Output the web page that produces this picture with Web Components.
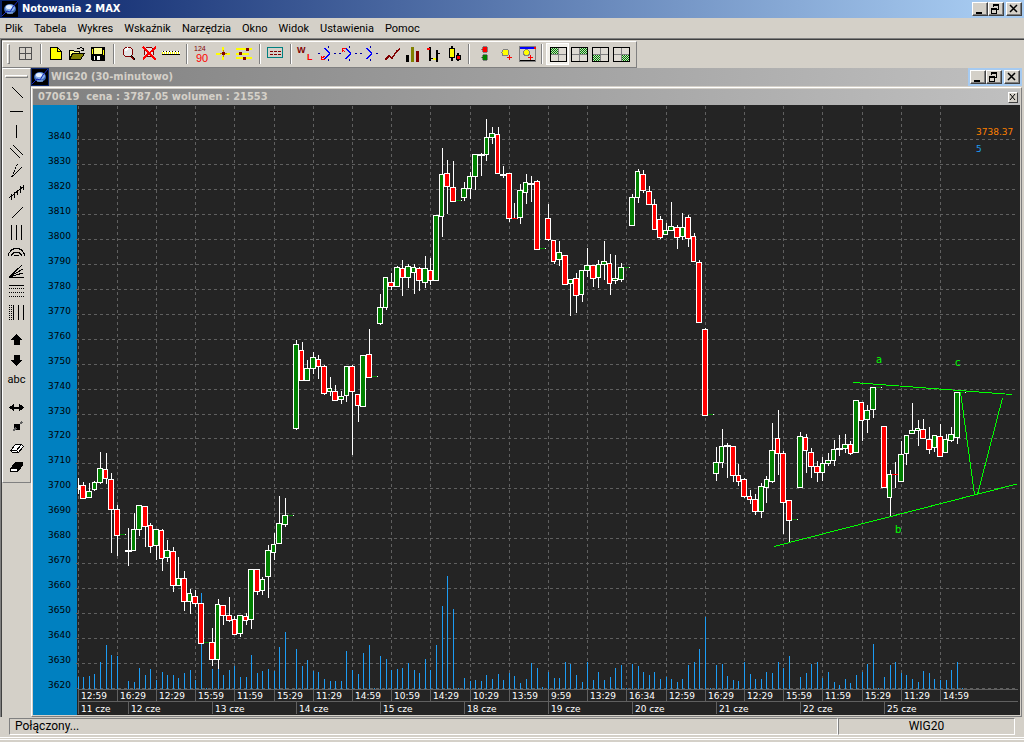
<!DOCTYPE html>
<html lang="pl">
<head>
<meta charset="utf-8">
<title>Notowania 2 MAX</title>
<style>
  body {
    margin: 0;
    background: #d4d0c8;
    --face: #d4d0c8;
    --shadow: #808080;
    --dark: #404040;
    --light: #ffffff;
    --caption: "DejaVu Sans Condensed", "DejaVu Sans", sans-serif;
    font: 11px/14px Roboto, "Liberation Sans", sans-serif;
    color: #000;
  }
</style>
</head>
<body>
<notowania-app></notowania-app>

<script>
const LOGO = /* html */`
  <svg width="16" height="16" viewBox="0 0 16 16" aria-hidden="true">
    <rect width="16" height="16" fill="#000"/>
    <ellipse cx="8" cy="8" rx="6" ry="5" fill="#3c68b8"/>
    <ellipse cx="8" cy="7" rx="5" ry="3.5" fill="#86aee6"/>
    <ellipse cx="7" cy="6" rx="3" ry="2" fill="#e8f2ff"/>
    <path d="M0 15L5 10l3 1 3-5 5-6" fill="none" stroke="#1828b8"/>
    <path d="M5 12h6" stroke="#9cc0f0"/>
  </svg>`;

const ARROW_DOTS = `<path d="M1 9.5h2M17 9.5h2M11.5 2v2M11.5 15v2" stroke="#0000a0"/><path d="M8 4l4.5 5.5-4.5 5.5" stroke="#00f" stroke-width="1.5"/>`;
const quadrant = (x, y) => `
  <path d="M3.5 3.5h16v14h-16z" fill="#dedad2" stroke="#000"/>
  <path d="M11.5 4v13M4 10.5h15" stroke="#808080"/>
  <rect x="${x}" y="${y}" width="7" height="6" fill="url(#check)"/>`;

// main toolbar icons, 21 x 20
const ICONS = {
  siatka: `<path d="M4.5 3.5h12v12h-12zM10.5 3.5v12M4.5 9.5h12" stroke="#505050"/>`,
  nowy: `<path d="M4.5 3.5h7l4 4v8h-11z" fill="#ff0" stroke="#000"/><path d="M11.5 3.5v4h4" stroke="#000"/>`,
  otworz: `<path d="M2.5 15.5v-9h4l1 1h5v2" fill="#ffff80" stroke="#000"/><path d="M2.5 15.5l3-6h12l-4 6z" fill="#808000" stroke="#000"/><path d="M10 4.5h2l2-1 2 1v2M14 6.5h3" stroke="#000"/>`,
  zapisz: `<path d="M3.5 3.5h13v13h-12l-1-1z" fill="#000" stroke="#000"/><path d="M6 4h8v6h-8z" fill="#ffff90"/><path d="M4 5h1v5h-1zM15 6h1v5h-1z" fill="#ff0"/><path d="M6 12h6v4h-6z" fill="#fff"/><path d="M7 12h2v4h-2z" fill="#000"/>`,
  lupa: `<circle cx="9" cy="8" r="5" fill="#e4e4e4" stroke="#800000"/><path d="M6 7l3-3" stroke="#fff" stroke-width="2"/><path d="M12 12l4 4" stroke="#000" stroke-width="2"/><path d="M12 12l3 4" stroke="#800000"/>`,
  lupax: `<circle cx="9" cy="8" r="5" fill="#e4e4e4" stroke="#800000"/><path d="M12 12l4 4" stroke="#800000" stroke-width="2"/><path d="M3 3l13 13M16 3L3 15" stroke="#f00" stroke-width="2"/>`,
  linijka: `<path d="M1 7h18v4h-18z" fill="#fff"/><path d="M1 9h18" stroke="#ff0" stroke-width="2" stroke-dasharray="1 1"/><path d="M1 10.5h18" stroke="#000"/><path d="M2 7.5h17" stroke="#000" stroke-dasharray="1 2"/>`,
  liczby: `<text x="2" y="7" font-size="7" fill="#800000">124</text><text x="4" y="18" font-size="11" fill="#f00">90</text>`,
  plus: `<path d="M10 3v4M10 12v4M3 9.5h5M12 9.5h5" stroke="#ff0" stroke-width="2"/><path d="M10 6v7M7 9.5h7" stroke="#c08000"/><path d="M9 8h3v3h-3z" fill="#800000"/>`,
  suwaki: `<path d="M2 5h16M2 9.5h13M2 14h16" stroke="#ff0" stroke-width="2"/><path d="M12 4h3v3h-3zM5 8h3v3h-3zM9 13h3v3h-3z" fill="#800000"/>`,
  panel: `<path d="M2.5 3.5h15v10h-15z" stroke="#008080"/><path d="M5 7.5h11M5 10.5h11" stroke="#800000" stroke-dasharray="3 1"/>`,
  wl: `<text x="1" y="9" font-size="9" font-weight="bold" fill="#800000">W</text><text x="11" y="16" font-size="9" font-weight="bold" fill="#f00">L</text>`,
  fala1: ARROW_DOTS + `<path d="M4.5 12v3.5h3M4 15l4-3" stroke="#f00"/>`,
  fala2: ARROW_DOTS + `<path d="M4.5 8v-3.5h3M4 5l3 3" stroke="#f00"/>`,
  fala3: ARROW_DOTS,
  linia: `<path d="M5 16l4-4 3 2 5-7 3-2" stroke="#800000" stroke-width="1.5"/>`,
  slupki: `<path d="M5 11h3v7h-3z" fill="#000"/><path d="M10 3h3v15h-3z" fill="#808000"/><path d="M15 7h3v11h-3z" fill="#800000"/>`,
  ohlc: `<path d="M8 3v14M15 6v12" stroke="#000" stroke-width="2"/><path d="M5 5h3" stroke="#f00" stroke-width="2"/><path d="M9 14.5h2M15 9.5h3" stroke="#000"/><path d="M11 14.5h3" stroke="#ff0" stroke-width="2"/>`,
  swiece: `<path d="M9 2v15M15 9v8" stroke="#000" stroke-width="1.5"/><path d="M6.5 4.5h5v9h-5z" fill="#ff0" stroke="#000"/><path d="M13.5 11.5h4v4h-4z" fill="#f00" stroke="#000"/>`,
  swiatla: `<circle cx="11" cy="5.5" r="3" fill="#f00" stroke="#808080"/><circle cx="11" cy="13.5" r="3" fill="#008000" stroke="#808080"/>`,
  alarm: `<circle cx="10.5" cy="8.5" r="3.5" fill="#ff0" stroke="#808080"/><path d="M14.5 11v5M12 13.5h5" stroke="#f00"/>`,
  alarmokno: `<path d="M3.5 2.5h16v15h-16z" stroke="#808080"/><path d="M4 4h14" stroke="#00f" stroke-width="2"/><path d="M18 3h2v2h-2z" fill="#f00"/><path d="M4 16.5h15" stroke="#000"/><circle cx="10.5" cy="8.5" r="3" fill="#ff0" stroke="#808080"/><path d="M14.5 11v5M12 13.5h5" stroke="#f00"/>`,
  uklad1: quadrant(4, 4),
  uklad2: quadrant(12, 4),
  uklad3: quadrant(4, 11),
  uklad4: quadrant(12, 11)
};

// drawing tool icons, 27 x 20
const TOOLS = {
  spadek: `<path d="M9 5l11 11" stroke="#000"/>`,
  pozioma: `<path d="M7 9.5h13" stroke="#000"/>`,
  pionowa: `<path d="M13.5 3v13" stroke="#000"/>`,
  kanal: `<path d="M7 6l10 10M10 3l10 10" stroke="#000"/>`,
  wachlarz: `<path d="M9 15l10-10" stroke="#000"/><path d="M8.5 15L14.5 2" stroke="#000" stroke-dasharray="2 1"/>`,
  widly: `<path d="M6 16l15-12" stroke="#000"/><path d="M8.5 12v6M11.5 10v6M14.5 8v5M17.5 4v7M20.5 3v5" stroke="#000"/>`,
  wzrost: `<path d="M9 16l11-11" stroke="#000"/>`,
  cykle: `<path d="M8.5 3v15M13.5 3v15M18.5 3v15" stroke="#000"/>`,
  luki: `<path d="M5.5 14v-2l3-4 3-1.5h4l3 1.5 3 4v2M8.5 14v-1l3-3h4l3 3v1M11.5 14l1-1h2l1 1" stroke="#000"/>`,
  fan: `<path d="M6 15L19 3M6 15l14-8M6 15l14-4M6 15.5h15" stroke="#000"/>`,
  poziomy: `<path d="M6 3.5h15" stroke="#000"/><path d="M6 6.5h15M6 10.5h15M6 14.5h15" stroke="#000" stroke-dasharray="1 1"/>`,
  strefy: `<path d="M6.5 3v15M8.5 3v15" stroke="#000" stroke-dasharray="1 1"/><path d="M10.5 3v15M15.5 3v15M20.5 3v15" stroke="#000"/>`,
  gora: `<path d="M13.5 4l6 6h-3v5h-6v-5h-3z" fill="#000"/>`,
  dol: `<path d="M13.5 16l6-6h-3v-5h-6v5h-3z" fill="#000"/>`,
  napis: "abc",
  rozciagnij: `<path d="M6 9.5l5-4v3h5v-3l5 4-5 4v-3h-5v3z" fill="#000"/>`,
  przesun: `<path d="M11 6h6v6h-6z" fill="#000"/><path d="M10 13l3-3M17 6l2-2" stroke="#606060" stroke-width="2"/>`,
  gumka: `<path d="M7.5 12.5l5-6h6l2 2-5 6h-6z" fill="#fff" stroke="#000"/><path d="M7.5 12.5h6l5-6M13.5 12.5l2 2" stroke="#000"/>`,
  gumkaw: `<path d="M7.5 10.5l5-6h7v3l-5 6h-7z" fill="#000" stroke="#000"/><path d="M8 11h6v2h-6z" fill="#fff"/>`
};

class ToolButton extends HTMLElement {
  connectedCallback() {
    const name = this.getAttribute("icon");
    const tool = TOOLS[name];
    const box = tool ? "0 0 27 20" : "0 0 21 20";
    const shape = tool || ICONS[name];
    const svg = /* html */`
      <svg viewBox="${box}" fill="none" shape-rendering="crispEdges" aria-hidden="true">
        <defs>
          <pattern id="check" width="2" height="2" patternUnits="userSpaceOnUse">
            <path d="M0 0h2v2h-2z" fill="#008000"/><path d="M0 0h1v1h-1zM1 1h1v1h-1z" fill="#c8d8c0"/>
          </pattern>
        </defs>
        ${shape}
      </svg>`;
    this.attachShadow({ mode: "open" }).innerHTML = /* html */`
      <style>
        :host { display: block; width: 21px; height: 20px; flex: none; }
        :host([wide]) { width: 27px; }
        button {
          display: grid;
          place-items: center;
          width: 100%;
          height: 100%;
          padding: 0;
          border: 0;
          background: none;
          font: inherit;
          line-height: 20px;
        }
        button[aria-pressed=true] { background: #f2f0ea; outline: 1px solid #fff; }
        svg { display: block; width: 100%; height: 100%; font-family: "Liberation Sans", sans-serif; }
      </style>
      <button type="button" aria-label="${name}"${this.hasAttribute("pressed") ? ` aria-pressed="true"` : ""}>${name === "napis" ? shape : svg}</button>`;
  }
}
customElements.define("tool-button", ToolButton);

class WindowButtons extends HTMLElement {
  connectedCallback() {
    this.attachShadow({ mode: "open" }).innerHTML = /* html */`
      <style>
        :host { display: flex; flex: none; padding: 2px; }
        button {
          width: 16px;
          height: 14px;
          padding: 0;
          border: 1px solid;
          border-color: #fff #404040 #404040 #fff;
          box-shadow: inset -1px -1px #808080;
          background: #d4d0c8;
        }
        button:last-child { margin-left: 2px; }
        svg { display: block; }
      </style>
      <button type="button" aria-label="Minimalizuj"><svg width="14" height="12"><path d="M3 9h6v2h-6z"/></svg></button>
      <button type="button" aria-label="Przywróć"><svg width="14" height="12" fill="none" stroke="#000" shape-rendering="crispEdges"><path d="M4.5 4V1.5h5v5h-2M4 2.5h6M2.5 5.5h5v5h-5zM2 6.5h6"/></svg></button>
      <button type="button" aria-label="Zamknij"><svg width="14" height="12" stroke="#000" stroke-width="1.5"><path d="M3 2l7 7M10 2l-7 7"/></svg></button>`;
  }
}
customElements.define("window-buttons", WindowButtons);

class TitleBar extends HTMLElement {
  connectedCallback() {
    this.attachShadow({ mode: "open" }).innerHTML = /* html */`
      <style>
        :host {
          display: flex;
          align-items: center;
          height: 18px;
          background: linear-gradient(90deg, #0a246a, #a6caf0 96%);
          color: #fff;
        }
        :host([inactive]) {
          background: linear-gradient(90deg, #808080, #c0c0c0);
          color: #d4d0c8;
        }
        .logo { display: flex; padding: 1px 2px; background: #0a246a; }
        :host([inactive]) .logo { padding: 1px; }
        h1 {
          flex: 1;
          margin: 0 2px;
          font: bold 11px/18px var(--caption);
          white-space: nowrap;
        }
        :host([inactive]) window-buttons { background: #a6caf0; }
      </style>
      <span class="logo">${LOGO}</span>
      <h1><slot></slot></h1>
      <window-buttons></window-buttons>`;
  }
}
customElements.define("title-bar", TitleBar);

class MenuBar extends HTMLElement {
  connectedCallback() {
    const items = ["Plik", "Tabela", "Wykres", "Wskaźnik", "Narzędzia", "Okno", "Widok", "Ustawienia", "Pomoc"];
    this.attachShadow({ mode: "open" }).innerHTML = /* html */`
      <style>
        :host { display: flex; height: 20px; padding-top: 1px; box-sizing: border-box; }
        button { padding: 0 5px; border: 0; background: none; font: inherit; }
        button + button { padding-left: 6px; }
      </style>
      ${items.map(item => `<button type="button">${item}</button>`).join("")}`;
  }
}
customElements.define("menu-bar", MenuBar);

class ToolBar extends HTMLElement {
  connectedCallback() {
    const groups = [
      "siatka",
      "nowy otworz zapisz",
      "lupa lupax linijka",
      "liczby plus suwaki",
      "panel",
      "wl fala1 fala2 fala3 linia slupki ohlc swiece",
      "swiatla alarm alarmokno",
      "uklad1 uklad2 uklad3 uklad4"
    ];
    const button = name => `<tool-button icon="${name}"${name === "uklad1" ? " pressed" : ""}></tool-button>`;
    this.attachShadow({ mode: "open" }).innerHTML = /* html */`
      <style>
        :host {
          display: flex;
          width: max-content;
          padding: 2px 5px 3px 4px;
          border: 1px solid;
          border-color: #fff #808080 #808080 #fff;
        }
        .grip { width: 1px; margin-right: 5px; border: 1px solid; border-color: #fff #808080 #808080 #fff; }
        hr { width: 1px; height: 20px; margin: 0 4px; border: 0; border-left: 1px solid #808080; background: #fff; }
      </style>
      <span class="grip"></span>
      ${groups.map(group => group.split(" ").map(button).join("")).join("<hr>")}`;
  }
}
customElements.define("tool-bar", ToolBar);

class ToolBox extends HTMLElement {
  connectedCallback() {
    const groups = [
      "spadek pozioma pionowa kanal wachlarz widly wzrost cykle luki fan poziomy strefy",
      "gora dol napis",
      "rozciagnij przesun gumka gumkaw"
    ];
    this.attachShadow({ mode: "open" }).innerHTML = /* html */`
      <style>
        :host {
          display: flex;
          flex-direction: column;
          gap: 8px;
          flex: none;
          align-self: flex-start;
          padding: 5px 0 4px;
          border: 1px solid;
          border-color: #fff #808080 #808080 #fff;
        }
        .grip { height: 1px; margin: 1px 2px -4px; border: 1px solid; border-color: #fff #808080 #808080 #fff; }
      </style>
      <span class="grip"></span>
      ${groups.map(group => `<div>${group.split(" ").map(name => `<tool-button wide icon="${name}"></tool-button>`).join("")}</div>`).join("")}`;
  }
}
customElements.define("tool-box", ToolBox);

const LEFT = 78;
const STEP = 5.6;
const FLOOR = 689;

// kind, high, body top, body bottom, low
// g rising, r falling, w unchanged, d flat tick, e flat tick (falling)
const CANDLES = `
w 478 485 490 494|r 482 485 499 499|g 483 491 498 498|g 481 482 490 491|g 452 468 483 484|r 453 469 479 484|r 473 479 510 553|r 505 509 536 556|d 534 534 534 534
w 528 550 552 566|g 513 529 551 551|g 505 505 530 536|r 506 506 527 547|r 523 525 547 553|g 529 529 546 560|r 529 530 559 571|g 540 550 558 562|r 547 551 586 592|g 557 578 586 586|r 571 578 602 611|g 589 593 602 614|r 590 596 604 607|r 603 603 644 644|d 642 642 642 642
r 628 642 660 666|g 599 604 660 669|r 605 605 616 625|r 597 615 621 622|r 616 619 635 635|g 615 615 634 637|r 613 616 621 625|g 569 569 620 629|r 569 569 592 595|g 577 579 591 595|g 545 550 577 598|g 533 544 553 560|g 496 523 544 544|g 498 515 525 527|d 515 515 515 515
g 340 344 429 430|r 342 350 381 381|g 360 368 381 381|g 352 357 369 374|r 355 359 367 379|r 365 366 394 395|g 377 388 392 396|r 385 391 401 401|g 391 396 400 404|g 366 366 396 402|r 365 366 392 455|r 394 394 406 422|g 355 355 407 407|r 329 354 378 378|d 376 376 376 376
g 294 307 324 325|g 277 277 308 310|r 273 282 287 290|g 266 267 287 287|r 260 268 278 296|g 264 266 278 288|g 264 267 273 294|r 267 268 281 291|g 256 268 283 288|r 258 270 281 285|g 215 215 281 281|g 148 174 217 237|r 160 173 187 214|r 161 187 202 202|d 200 200 200 200
g 182 188 198 201|g 172 176 189 199|g 154 154 177 190|w 153 154 156 176|g 119 137 155 161|g 127 133 138 144|r 127 134 174 174|w 166 174 176 178|r 173 173 219 222|e 203 218 218 219|g 184 190 218 224|g 174 182 193 204|w 176 183 185 202|r 180 181 250 250|d 248 248 248 248
r 204 218 240 241|r 240 240 262 264|g 241 252 260 266|r 255 255 285 285|g 279 279 284 316|r 273 278 296 313|g 270 270 295 302|g 248 265 271 277|r 265 265 279 287|g 260 264 278 288|g 241 261 265 280|r 254 263 284 295|g 255 278 281 284|g 263 267 280 282|d 267 267 267 267
g 194 197 226 226|g 169 171 198 203|r 170 174 191 193|r 186 191 205 205|r 199 204 230 230|r 216 219 238 239|g 223 230 235 235|g 202 226 231 231|r 225 227 238 249|g 213 227 237 240|r 215 217 239 247|r 233 236 262 262|r 260 262 323 323|r 328 329 416 416|d 414 414 414 414
g 447 462 474 481|g 429 446 463 468|w 443 445 447 478|r 446 446 476 482|r 464 475 482 486|r 478 479 497 498|r 490 496 500 504|r 494 499 512 515|g 483 486 512 518|g 476 479 488 503|g 423 450 482 483|r 410 438 454 475|r 451 453 503 534|r 500 500 521 543|d 519 519 519 519
g 432 436 488 488|r 434 437 451 473|r 448 452 467 478|r 461 466 473 482|g 457 463 473 481|g 453 460 464 466|g 440 449 461 466|w 435 448 450 456|g 434 444 449 453|r 441 444 454 455|g 400 400 453 453|r 402 402 421 441|g 405 410 420 433|g 387 387 410 418|d 387 387 387 387
r 426 426 488 488|g 470 474 498 516|e 462 474 474 488|g 441 454 482 482|g 435 435 454 465|g 403 430 434 434|g 420 428 431 446|r 419 429 439 439|r 427 439 450 454|g 435 435 448 452|r 424 436 457 457|g 434 439 453 453|g 427 434 441 442|g 392 392 438 444|d 392 392 392 392
`.trim().split(/[|\n]/).map(row => {
  const [kind, ...levels] = row.split(" ");
  return [kind, ...levels.map(Number)];
});

// top of every volume bar
const VOLUMES = [
  677, 677, 676, 674, 662, 645, 655, 656, 689,
  681, 682, 668, 675, 669, 680, 672, 675, 675, 678, 673, 670, 680, 593, 688,
  669, 669, 675, 670, 666, 677, 677, 655, 673, 671, 669, 671, 647, 632, 689,
  649, 666, 660, 671, 672, 679, 681, 681, 681, 651, 670, 674, 653, 645, 688,
  656, 659, 670, 669, 668, 663, 670, 673, 659, 670, 645, 606, 576, 609, 688,
  678, 681, 680, 681, 675, 679, 674, 680, 673, 676, 683, 679, 663, 668, 687,
  672, 678, 678, 662, 664, 675, 682, 662, 680, 672, 680, 677, 668, 665, 688,
  664, 666, 672, 675, 672, 679, 677, 679, 682, 679, 665, 662, 649, 617, 688,
  665, 664, 676, 680, 681, 662, 674, 679, 679, 672, 673, 662, 668, 656, 689,
  677, 673, 664, 662, 678, 672, 682, 685, 679, 683, 675, 672, 664, 644, 688,
  677, 665, 662, 673, 675, 679, 682, 671, 673, 679, 680, 680, 670, 662, 688
];

const HOURS = "12:59 16:29 12:29 15:59 11:59 15:29 11:29 14:59 10:59 14:29 10:29 13:59 9:59 13:29 16:34 12:59 16:29 12:29 15:59 11:59 15:29 11:29 14:59".split(" ");
const DAYS = [11, 12, 13, 14, 15, 18, 19, 20, 21, 22, 25];

class PriceChart extends HTMLElement {
  barX(i) {
    return Math.floor(LEFT + STEP * i + 0.01);
  }

  grid() {
    let lines = "";
    let labels = "";
    for (let i = 0; i <= 22; i++) {
      const y = Math.round(139 + i * 24.955);
      lines += `<path d="M76 ${y + 0.5}H1018"/>`;
      labels += `<text x="71" y="${y}" text-anchor="end">${3840 - i * 10}</text>`;
    }
    HOURS.forEach((hour, k) => {
      lines += `<path d="M${this.barX(k * 7) + 0.5} 106V${FLOOR}"/>`;
    });
    return `<g class="grid">${lines}</g><g class="prices">${labels}</g>`;
  }

  axis() {
    const hours = HOURS.map((hour, k) => {
      const x = this.barX(k * 7);
      return `<path d="M${x + 0.5} 689V701"/><text x="${x + 3}" y="699">${hour}</text>`;
    });
    const days = DAYS.map((day, k) => {
      const x = this.barX(k ? k * 15 - 6 : 0);
      return `<path d="M${x + 0.5} 701V714"/><text x="${x + 3}" y="712">${day} cze</text>`;
    });
    return `<g class="axis"><path d="M78 689.5H1018M78 701.5H1018"/>${hours.join("")}${days.join("")}</g>`;
  }

  volume() {
    const bars = VOLUMES.map((top, i) => `M${this.barX(i) + 0.5} ${top}V${FLOOR}`);
    return `<path class="volume" d="${bars.join("")}"/>`;
  }

  candle([kind, high, top, bottom, low], i) {
    const x = this.barX(i);
    const left = Math.max(LEFT, Math.floor(LEFT + STEP * i - 2.79));
    const right = Math.floor(LEFT + STEP * i + 2.81);
    const wick = low > high ? `<path d="M${x + 0.5} ${high}V${low}" stroke="#fff"/>` : "";
    if (kind === "d" || kind === "e") {
      const color = kind === "d" ? "#008000" : "#f00";
      return `${wick}<path d="M${left} ${top + 0.5}H${right}" stroke="${color}"/><path d="M${right} ${top + 0.5}h1" stroke="#fff"/>`;
    }
    const width = right - left;
    const height = bottom - top;
    if (kind === "w") {
      return `${wick}<rect x="${left}" y="${top}" width="${width + 1}" height="${height}" fill="#fff"/>`;
    }
    const fill = kind === "g" ? "#008000" : "#f00";
    return `${wick}<rect x="${left + 0.5}" y="${top + 0.5}" width="${width - 1}" height="${height - 1}" fill="${fill}" stroke="#fff"/>`;
  }

  connectedCallback() {
    this.attachShadow({ mode: "open" }).innerHTML = /* html */`
      <style>
        :host { display: block; background: #242424; }
        svg { display: block; width: 100%; height: auto; font: 9px "DejaVu Sans", sans-serif; }
        .grid { stroke: #606060; stroke-dasharray: 3 3; }
        .axis { stroke: #606060; }
        .axis text { stroke: none; fill: #fff; }
        .prices { fill: #000; }
        .volume { stroke: #1c9cf4; }
        .drawing { fill: none; stroke: #0f0; }
        .drawing text { fill: #0f0; stroke: none; font-size: 10px; }
      </style>
      <svg viewBox="33 105 987 610" fill="none" shape-rendering="crispEdges" role="img" aria-label="WIG20">
        <rect x="33" y="105" width="44" height="610" fill="#0080c0"/>
        ${this.grid()}
        ${this.axis()}
        ${this.volume()}
        ${CANDLES.map((candle, i) => this.candle(candle, i)).join("")}
        <g class="drawing">
          <path d="M853 382.5L1012 394.5M774 546.5L1017 484M960.5 392L974.5 494.5h3L1002.5 398"/>
          <text x="876" y="363">a</text>
          <text x="895" y="533">b</text>
          <text x="955" y="366">c</text>
        </g>
        <text x="976" y="135" fill="#ff8000">3738.37</text>
        <text x="976" y="152" fill="#1c9cf4">5</text>
      </svg>`;
  }
}
customElements.define("price-chart", PriceChart);

class ChartWindow extends HTMLElement {
  connectedCallback() {
    this.attachShadow({ mode: "open" }).innerHTML = /* html */`
      <style>
        :host { display: block; flex: 1; min-width: 0; }
        .frame {
          margin-top: 1px;
          padding: 1px;
          border: 1px solid;
          border-color: #fff #808080 #808080 #fff;
        }
        .info {
          display: flex;
          align-items: center;
          justify-content: space-between;
          height: 16px;
          padding: 0 2px 0 5px;
          background: linear-gradient(90deg, #808080, #c0c0c0);
          color: #d4d0c8;
          font: bold 11px/16px var(--caption);
          white-space: pre;
        }
        button {
          width: 10px;
          height: 11px;
          padding: 0;
          border: 1px solid;
          border-color: #fff #404040 #404040 #fff;
          background: #d4d0c8;
        }
        svg { display: block; }
      </style>
      <title-bar inactive>WIG20 (30-minutowo)</title-bar>
      <div class="frame">
        <div class="info"><span>070619  cena : 3787.05 wolumen : 21553</span><button type="button" aria-label="Zamknij wykres"><svg width="8" height="8" stroke="#000"><path d="M1 1l5 6M6 1l-5 6"/></svg></button></div>
        <price-chart></price-chart>
      </div>`;
  }
}
customElements.define("chart-window", ChartWindow);

class StatusBar extends HTMLElement {
  connectedCallback() {
    this.attachShadow({ mode: "open" }).innerHTML = /* html */`
      <style>
        :host { display: flex; padding: 0 9px 2px; font-size: 12px; }
        ::slotted(span) {
          box-sizing: border-box;
          height: 17px;
          border: 1px solid;
          border-color: #808080 #fff #fff #808080;
          line-height: 15px;
        }
        ::slotted(span:first-child) { flex: 1; padding-left: 5px; }
        ::slotted(span:last-child) { width: 177px; text-align: center; }
      </style>
      <slot></slot>`;
  }
}
customElements.define("status-bar", StatusBar);

class NotowaniaApp extends HTMLElement {
  connectedCallback() {
    this.attachShadow({ mode: "open" }).innerHTML = /* html */`
      <style>
        :host { display: block; background: var(--face); }
        .client {
          border-top: 1px solid var(--shadow);
          border-left: 1px solid var(--shadow);
          box-shadow: inset 1px 1px var(--dark);
          padding: 2px 0 0 1px;
        }
        .desk { display: flex; padding-right: 2px; }
        status-bar { padding-top: 1px; }
        footer { height: 1px; border: 1px solid var(--light); border-width: 1px 0; margin-bottom: 2px; }
      </style>
      <title-bar>Notowania 2 MAX</title-bar>
      <menu-bar></menu-bar>
      <div class="client">
        <tool-bar></tool-bar>
        <div class="desk">
          <tool-box></tool-box>
          <chart-window></chart-window>
        </div>
      </div>
      <status-bar><span>Połączony...</span><span>WIG20</span></status-bar>
      <footer></footer>`;
  }
}
customElements.define("notowania-app", NotowaniaApp);
</script>
</body>
</html>
